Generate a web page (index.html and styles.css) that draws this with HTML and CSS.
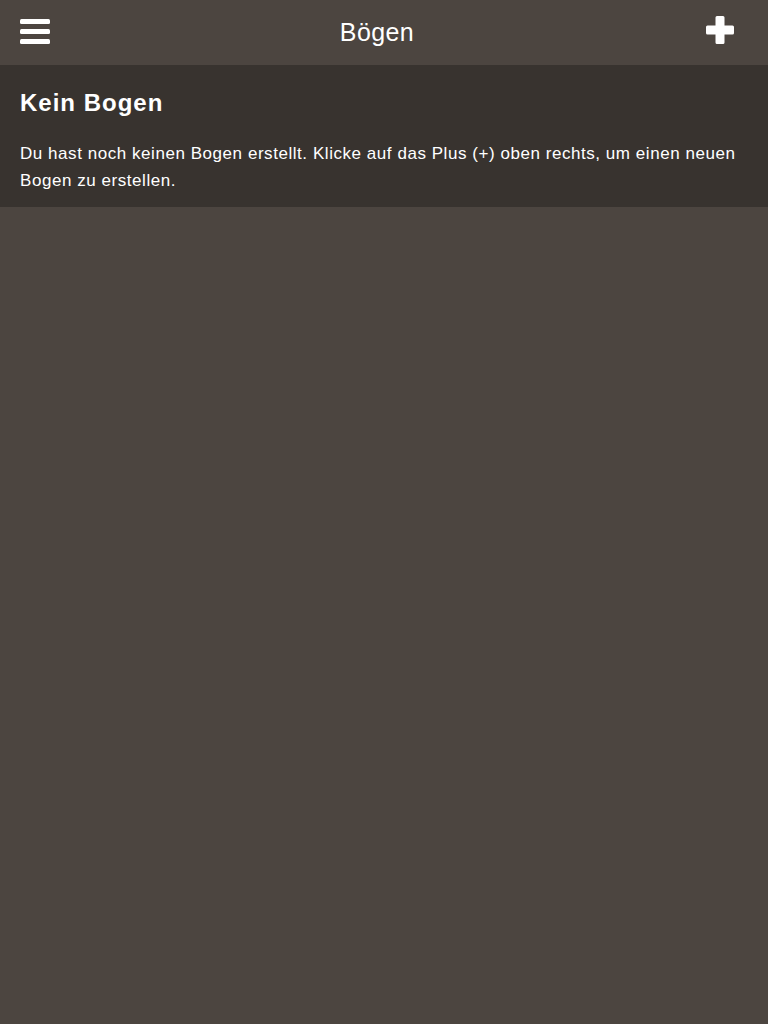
FILE: index.html
```html
<!DOCTYPE html>
<html lang="de">
<head>
<meta charset="utf-8">
<title>Bögen</title>
<link rel="stylesheet" href="styles.css">
</head>
<body>
<header class="topbar">
  <button class="icon-btn menu" aria-label="Menü">
    <svg width="30" height="26" viewBox="0 0 30 26"><rect x="0" y="0" width="30" height="5" rx="1.5" fill="#fff"/><rect x="0" y="10" width="30" height="5" rx="1.5" fill="#fff"/><rect x="0" y="20" width="30" height="5" rx="1.5" fill="#fff"/></svg>
  </button>
  <h1 class="title">Bögen</h1>
  <button class="icon-btn add" aria-label="Hinzufügen">
    <svg width="28" height="28" viewBox="0 0 28 28"><path d="M9.5 1.5a1.5 1.5 0 0 1 1.5-1.5h6a1.5 1.5 0 0 1 1.5 1.5V9.5h8a1.5 1.5 0 0 1 1.5 1.5v6a1.5 1.5 0 0 1-1.5 1.5h-8v8a1.5 1.5 0 0 1-1.5 1.5h-6a1.5 1.5 0 0 1-1.5-1.5v-8h-8A1.5 1.5 0 0 1 0 17v-6a1.5 1.5 0 0 1 1.5-1.5h8z" fill="#fff"/></svg>
  </button>
</header>
<section class="notice">
  <h2 class="notice-title">Kein Bogen</h2>
  <p class="notice-text">Du hast noch keinen Bogen erstellt. Klicke auf das Plus (+) oben rechts, um einen neuen Bogen zu erstellen.</p>
</section>
</body>
</html>
```
FILE: styles.css
```css
html, body {
  margin: 0;
  padding: 0;
  height: 100%;
}
body {
  background: #4c4540;
  color: #fff;
  font-family: "Liberation Sans", Arial, sans-serif;
}
.topbar {
  height: 65px;
  display: flex;
  align-items: center;
  justify-content: space-between;
  padding: 0 34px 0 20px;
  position: relative;
}
.icon-btn {
  background: none;
  border: 0;
  padding: 0;
  display: flex;
  cursor: pointer;
}
.menu { margin-top: -2px; }
.add { margin-top: -5px; }
.title {
  position: absolute;
  left: 0;
  right: 0;
  top: 0;
  margin: 0;
  text-align: center;
  font-weight: normal;
  font-size: 25px;
  letter-spacing: 0.4px;
  line-height: 65px;
  pointer-events: none;
  padding-right: 14px;
}
.notice {
  background: #38332f;
  padding: 20px 20px 13px;
}
.notice-title {
  margin: 0;
  font-size: 24px;
  font-weight: bold;
  letter-spacing: 1px;
  line-height: 36px;
}
.notice-text {
  margin: 19px 0 0;
  font-size: 17px;
  letter-spacing: 0.55px;
  line-height: 27px;
}
```
